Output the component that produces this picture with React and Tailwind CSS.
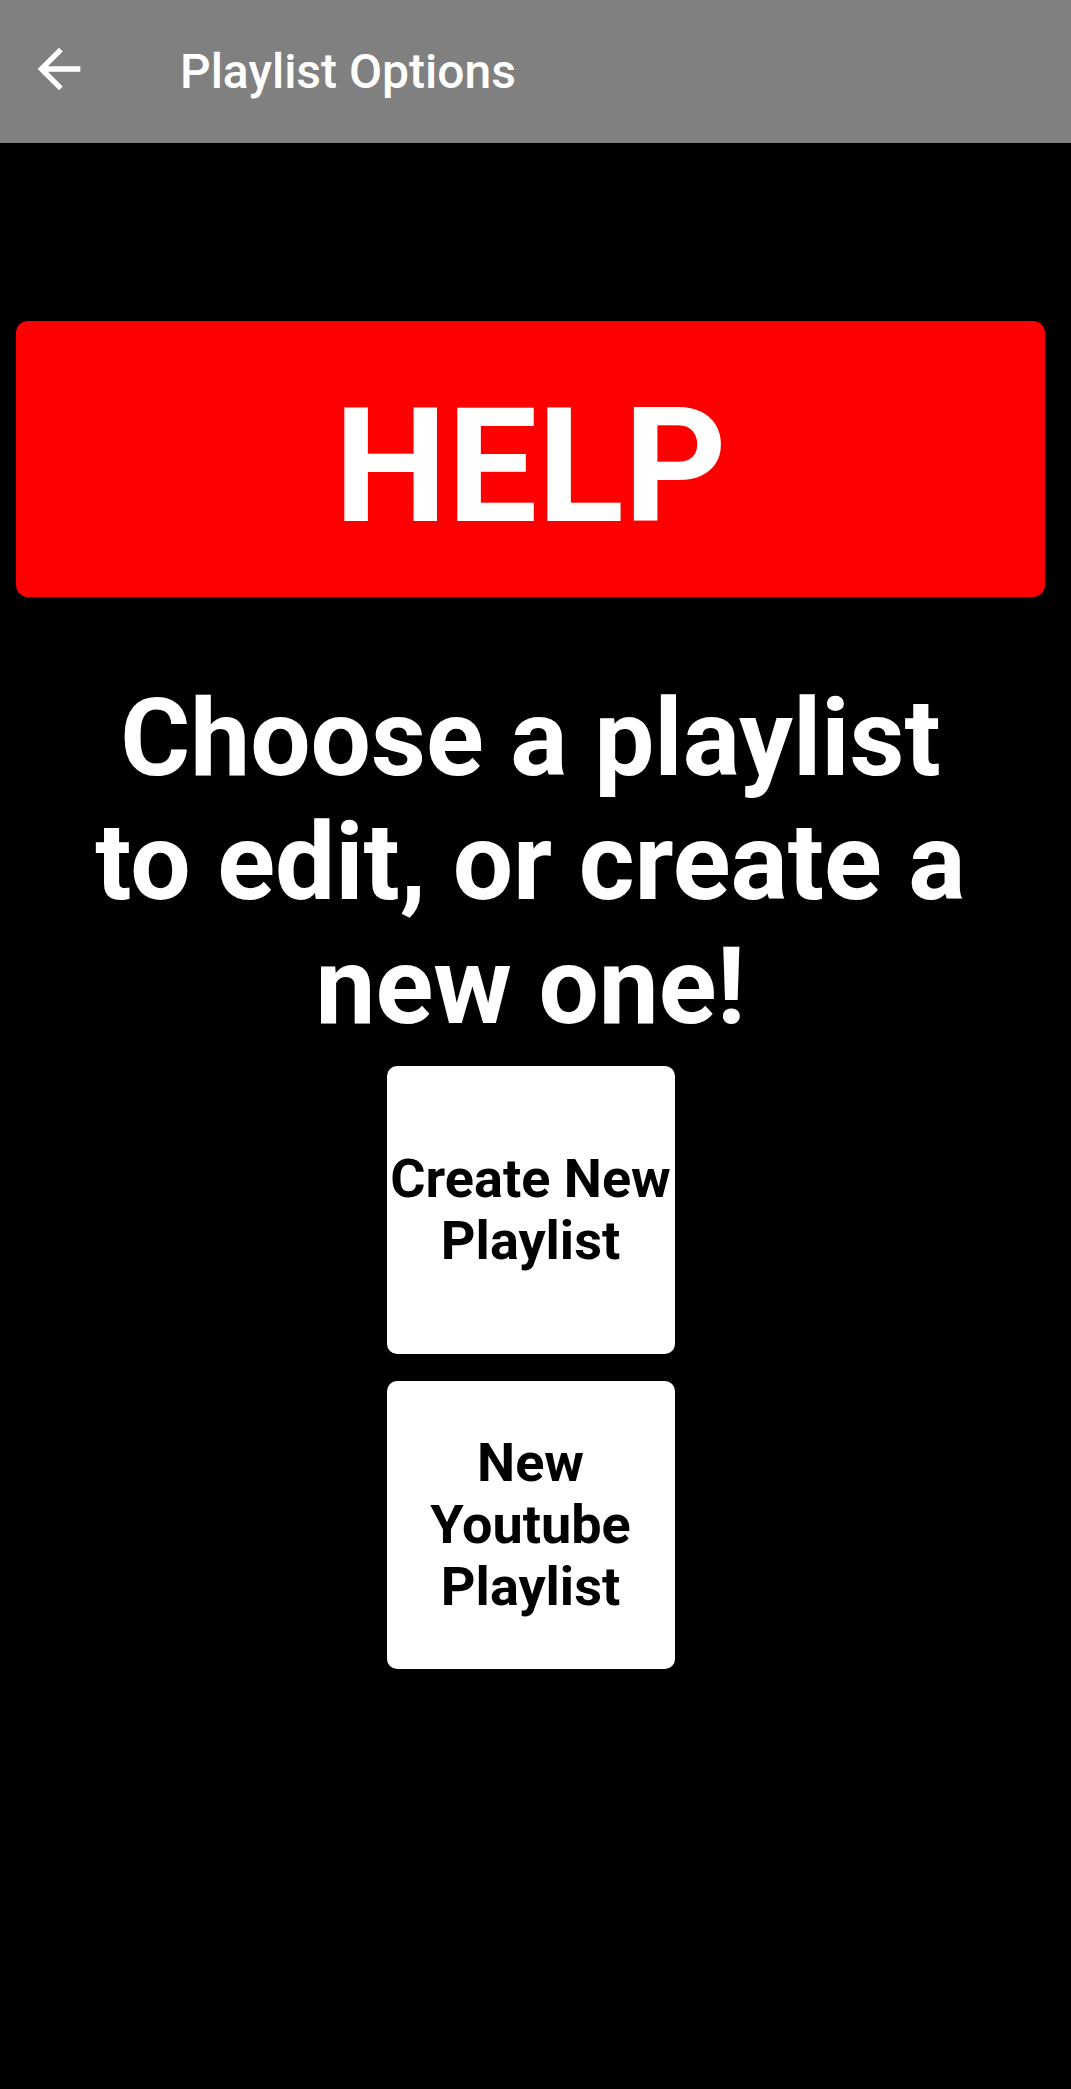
const BackArrow = () => (
  <svg viewBox="0 0 24 24" className="w-[64px] h-[64px]" fill="white">
    <path d="M20 11H7.83l5.59-5.59L12 4l-8 8 8 8 1.41-1.41L7.83 13H20v-2z" />
  </svg>
);

const Tile = ({ children }) => (
  <button className="w-[288px] h-[288px] bg-white rounded-[10px] flex items-center justify-center text-black font-bold text-[54px] leading-[62px] text-center">
    {children}
  </button>
);

export default function App() {
  return (
    <div className="min-h-[2089px] bg-black font-['Roboto',sans-serif]">
      <header className="h-[143px] bg-[#808080] flex items-center">
        <div className="ml-[27px] -mt-[5px]">
          <BackArrow />
        </div>
        <h1 className="ml-[89px] text-white text-[48px] font-medium leading-none">Playlist Options</h1>
      </header>

      <main className="pl-[16px] pr-[26px] flex flex-col items-center">
        <button className="mt-[178px] w-full h-[276px] bg-[#ff0000] rounded-[12px] flex items-center justify-center pt-4">
          <span className="text-white font-bold text-[160px] leading-none">HELP</span>
        </button>

        <h2 className="mt-[80px] max-w-[920px] text-white font-bold text-[107px] leading-[124px] text-center">
          Choose a playlist to edit, or create a new one!
        </h2>

        <div className="mt-[17px] flex flex-col gap-[27px]">
          <Tile>Create New Playlist</Tile>
          <Tile>New Youtube Playlist</Tile>
        </div>
      </main>
    </div>
  );
}
